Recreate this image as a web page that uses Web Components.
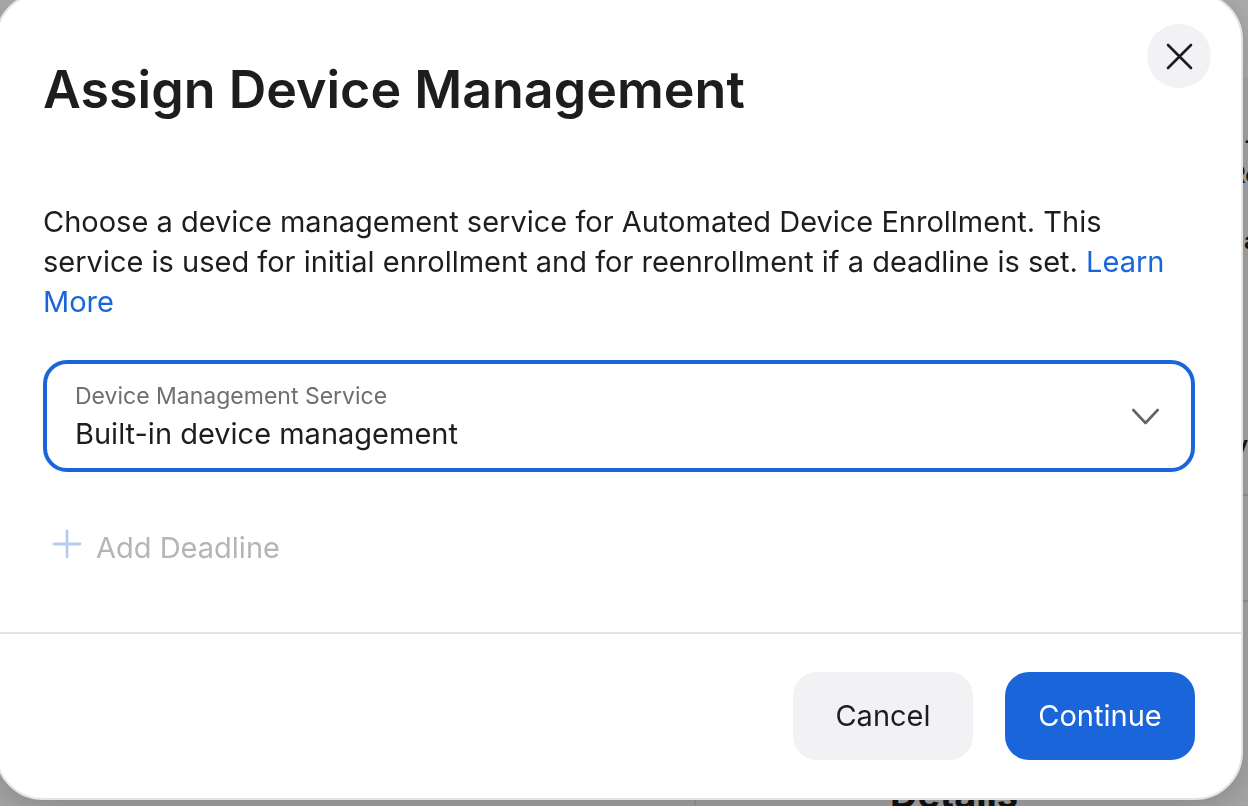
<!DOCTYPE html>
<html lang="en">
<head>
<meta charset="utf-8">
<meta name="viewport" content="width=device-width, initial-scale=1">
<title>Assign Device Management</title>
<style>
  html, body { margin: 0; height: 100%; overflow: hidden; }
  body { font-family: Inter, "Liberation Sans", sans-serif; font-size: 29px; line-height: 40px; color: #1d1d1f; background: #a8a8a8; }
</style>
</head>
<body>
<device-page></device-page>
<modal-dialog heading="Assign Device Management">
  <info-text>Choose a device management service for Automated Device Enrollment. This service is used for initial enrollment and for reenrollment if a deadline is set.</info-text>
  <service-select label="Device Management Service" value="Built-in device management"></service-select>
  <add-button>Add Deadline</add-button>
  <action-button slot="actions">Cancel</action-button>
  <action-button slot="actions" primary>Continue</action-button>
</modal-dialog>

<script>
function define(name, html, setup) {
  const template = document.createElement("template");
  template.innerHTML = html;
  customElements.define(name, class extends HTMLElement {
    constructor() {
      super();
      this.attachShadow({ mode: "open" }).append(template.content.cloneNode(true));
    }
    connectedCallback() { if (setup) setup(this, this.shadowRoot); }
  });
}

define("device-page", `
<style>
  :host { position: fixed; inset: 0; overflow: hidden; display: grid; grid-template-rows: 78px 1fr; background: #acacac; color: #111; }
  main { background: #a6a6a6; display: grid; grid-template-columns: 694px 1fr; }
  section { border-left: 2px solid #999; display: flex; flex-direction: column; justify-content: space-between; overflow: hidden; }
  ul { list-style: none; margin: 0; padding: 0; font-size: 24px; line-height: 34px; }
  li { box-sizing: border-box; }
  p { margin: 0; white-space: nowrap; padding-left: 548px; font-weight: 600; }
  .name { padding-left: 534px; }
  .end { padding-left: 538px; margin-top: 170px; }
  .gap { margin-top: 32px; }
  .tall { height: 418px; padding-top: 46px; border-bottom: 2px solid #939393; }
  .short { height: 106px; border-bottom: 2px solid #939393; }
  h2 { margin: 0 0 -8px 194px; font-size: 38px; line-height: 40px; font-weight: 700; }
</style>
<header></header>
<main><nav></nav><section><ul><li class="tall"><p>-</p><p class="name">Re</p><p class="gap">a</p><p class="end">y</p></li><li class="short"></li></ul><h2>Details</h2></section></main>`);

define("modal-dialog", `
<style>
  :host { position: relative; display: block; box-sizing: border-box; margin: -8px 5px 6px -5px; border: 2px solid #e3e3e8; border-radius: 48px; background: #fff; box-shadow: 0 8px 32px rgba(0,0,0,.18); }
  header { display: flex; justify-content: space-between; align-items: flex-start; padding: 30px 30px 0 46px; }
  h1 { margin: 34px 0 0; font-size: 52px; line-height: 64px; font-weight: 600; }
  .close { flex: none; width: 64px; height: 64px; padding: 0; border: 0; border-radius: 50%; background: #f2f2f4; display: grid; place-items: center; }
  .body { display: flex; flex-direction: column; align-items: stretch; padding: 78px 46px 64px; }
  footer { display: flex; justify-content: flex-end; gap: 32px; padding: 38px 46px; border-top: 2px solid #e3e3e8; }
</style>
<div role="dialog" aria-labelledby="t">
  <header>
    <h1 id="t"></h1>
    <button class="close" aria-label="Close"><svg width="28" height="28" viewBox="0 0 28 28" fill="none" stroke="#1d1d1f" stroke-width="2.6" stroke-linecap="round"><path d="M3 3 26 26M26 3 3 26"/></svg></button>
  </header>
  <div class="body"><slot></slot></div>
  <footer><slot name="actions"></slot></footer>
</div>`, (el, root) => { root.querySelector("h1").textContent = el.getAttribute("heading"); });

define("info-text", `
<style>
  :host { display: block; margin-bottom: 38px; padding-top: 2px; }
  p { margin: 0; }
  a { color: #1b65db; text-decoration: none; }
</style>
<p><slot></slot> <a href="#learn">Learn More</a></p>`);

define("service-select", `
<style>
  :host { display: block; }
  .box { display: grid; box-sizing: border-box; grid-template-columns: 1fr 32px; align-items: center; padding: 14px 28px; border: 4px solid #1b65db; border-radius: 24px; }
  label { grid-column: 1; font-size: 23px; line-height: 36px; color: #6e6e73; }
  select { grid-column: 1; min-width: 0; appearance: none; border: 0; outline: 0; padding: 0; margin: 0; background: none; font: inherit; line-height: 40px; height: 40px; color: inherit; }
  svg { grid-column: 2; grid-row: 1 / 3; }
</style>
<div class="box">
  <label for="s"></label>
  <select id="s"><option></option></select>
  <svg width="32" height="32" viewBox="0 0 32 32" fill="none" stroke="#636366" stroke-width="2.6" stroke-linecap="round" stroke-linejoin="round"><path d="M2.300 10 14.500 23 26.700 10"/></svg>
</div>`, (el, root) => {
  root.querySelector("label").textContent = el.getAttribute("label");
  root.querySelector("option").textContent = el.getAttribute("value");
});

define("add-button", `
<style>
  :host { display: block; margin-top: 56px; }
  button { display: flex; align-items: center; gap: 13px; padding: 0 8px; border: 0; background: none; font: inherit; color: #b5b5b7; }
  svg { margin-bottom: 8px; }
</style>
<button disabled><svg width="32" height="32" viewBox="0 0 32 32" fill="none" stroke="#b4cdf3" stroke-width="2.8" stroke-linecap="round"><path d="M16 3V29M3 16H29"/></svg><slot></slot></button>`);

define("action-button", `
<style>
  :host { display: block; }
  button { min-width: 180px; height: 88px; padding: 0 32px; border: 0; border-radius: 24px; background: #f2f2f4; color: inherit; font: inherit; }
  :host([primary]) button { min-width: 190px; background: #1b65db; color: #fff; }
</style>
<button><slot></slot></button>`);
</script>
</body>
</html>
